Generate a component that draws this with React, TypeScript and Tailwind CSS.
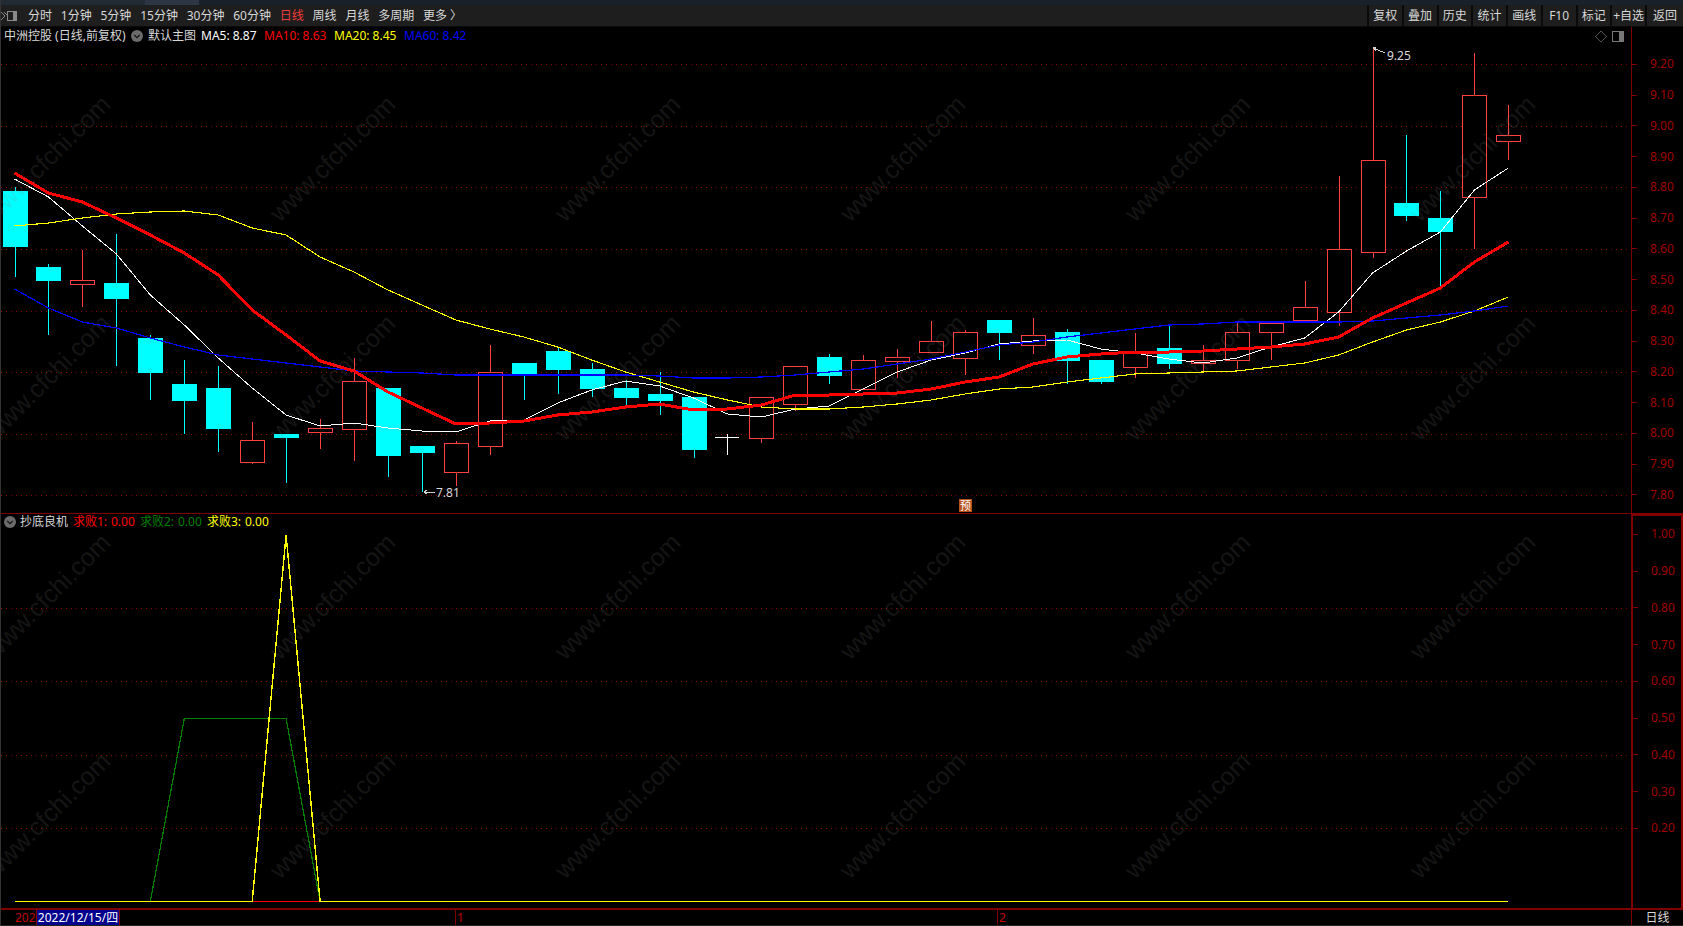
import React from 'react';

type Candle = [number, number, number, number, 'c' | 'r' | 'w'];

const candles: Candle[] = [
  [187, 191, 246, 277, 'c'],
  [264, 267, 280, 335, 'c'],
  [250, 280, 284, 307, 'r'],
  [234, 283, 298, 366, 'c'],
  [335, 338, 372, 400, 'c'],
  [360, 384, 400, 434, 'c'],
  [366, 388, 428, 452, 'c'],
  [422, 440, 462, 464, 'r'],
  [434, 434, 437, 483, 'c'],
  [419, 428, 432, 449, 'r'],
  [358, 381, 429, 461, 'r'],
  [388, 388, 455, 477, 'c'],
  [446, 446, 452, 492, 'c'],
  [441, 443, 472, 486, 'r'],
  [345, 372, 446, 455, 'r'],
  [363, 363, 375, 400, 'c'],
  [348, 351, 369, 394, 'c'],
  [363, 369, 388, 397, 'c'],
  [380, 388, 397, 405, 'c'],
  [372, 394, 400, 415, 'c'],
  [397, 397, 449, 458, 'c'],
  [434, 437, 437, 455, 'w'],
  [397, 397, 438, 443, 'r'],
  [366, 366, 404, 411, 'r'],
  [354, 357, 375, 384, 'c'],
  [355, 360, 389, 389, 'r'],
  [349, 357, 361, 378, 'r'],
  [321, 341, 352, 352, 'r'],
  [330, 332, 358, 375, 'r'],
  [320, 320, 332, 360, 'c'],
  [318, 335, 345, 354, 'r'],
  [329, 332, 360, 384, 'c'],
  [360, 360, 381, 384, 'c'],
  [333, 353, 367, 378, 'r'],
  [325, 348, 363, 369, 'c'],
  [345, 360, 363, 372, 'r'],
  [321, 332, 360, 369, 'r'],
  [323, 323, 332, 360, 'r'],
  [281, 307, 320, 320, 'r'],
  [176, 249, 312, 326, 'r'],
  [48, 160, 252, 258, 'r'],
  [135, 203, 215, 221, 'c'],
  [191, 218, 231, 288, 'c'],
  [53, 95, 197, 249, 'r'],
  [105, 135, 141, 160, 'r'],
];

const ma5 = [179, 197, 226, 254, 295, 325, 358, 388, 415, 426, 423, 428, 431, 432, 421, 420, 403, 390, 381, 386, 398, 414, 417, 409, 406, 389, 372, 360, 353, 344, 341, 340, 349, 353, 359, 363, 358, 347, 338, 312, 273, 251, 232, 190, 168];
const ma10 = [173, 193, 202, 218, 235, 253, 275, 310, 335, 361, 371, 392, 408, 424, 423, 421, 415, 412, 407, 404, 410, 409, 405, 395, 395, 394, 393, 389, 382, 377, 364, 357, 354, 352, 352, 351, 349, 347, 344, 337, 318, 303, 288, 262, 242];
const ma20 = [226, 223, 218, 214, 212, 211, 215, 228, 235, 257, 272, 290, 305, 320, 329, 337, 347, 360, 372, 382, 392, 400, 407, 409, 409, 407, 404, 400, 394, 389, 387, 382, 378, 374, 373, 372, 371, 367, 363, 355, 342, 330, 322, 311, 297];
const ma60 = [289, 308, 322, 328, 338, 347, 355, 359, 363, 367, 371, 372, 373, 375, 375, 375, 375, 375, 375, 376, 378, 378, 377, 375, 372, 369, 364, 359, 352, 345, 342, 337, 333, 329, 325, 324, 322, 322, 322, 322, 321, 318, 315, 311, 306];

const xAt = (i: number) => 14.5 + 33.95 * i;
const pts = (ys: number[]) => ys.map((y, i) => `${xAt(i).toFixed(1)},${y}`).join(' ');

const mainGrid = [64.5, 126.5, 187.5, 249.5, 311.5, 372.5, 434.5, 495.5];
const subGrid = [608.5, 681.5, 755.5, 828.5];
const mainLabels = ['9.20', '9.10', '9.00', '8.90', '8.80', '8.70', '8.60', '8.50', '8.40', '8.30', '8.20', '8.10', '8.00', '7.90', '7.80'];
const subLabels = ['1.00', '0.90', '0.80', '0.70', '0.60', '0.50', '0.40', '0.30', '0.20'];

const leftMenu = ['分时', '1分钟', '5分钟', '15分钟', '30分钟', '60分钟', '日线', '周线', '月线', '多周期', '更多 〉'];
const rightMenu = ['复权', '叠加', '历史', '统计', '画线', 'F10', '标记', '+自选', '返回'];

const zero = 901.5;
const redLine = pts(candles.map(() => zero));
const greenLine = pts(candles.map((_, i) => (i >= 5 && i <= 8 ? 718.5 : zero)));
const yellowLine = pts(candles.map((_, i) => (i === 8 ? 535 : zero)));

function CandleMark({ candle, index }: { candle: Candle; index: number }) {
  const [top, bodyTop, bodyBottom, bottom, kind] = candle;
  const x = Math.round(xAt(index)) + 0.5;
  const left = Math.round(xAt(index) - 12);
  if (kind === 'w') {
    return (
      <g stroke="#ffffff">
        <line x1={x} x2={x} y1={top} y2={bottom} />
        <line x1={left} x2={left + 24} y1={bodyTop + 0.5} y2={bodyTop + 0.5} />
      </g>
    );
  }
  const color = kind === 'c' ? '#00ffff' : '#ff4040';
  return (
    <g stroke={color}>
      <line x1={x} x2={x} y1={top} y2={bodyTop} />
      <line x1={x} x2={x} y1={bodyBottom} y2={bottom} />
      <rect
        x={left + 0.5}
        y={bodyTop + 0.5}
        width={24}
        height={bodyBottom - bodyTop}
        fill={kind === 'c' ? '#00ffff' : '#000000'}
      />
    </g>
  );
}

function Chevron() {
  return (
    <svg width="12" height="12" viewBox="0 0 12 12" className="shrink-0">
      <circle cx="6" cy="6" r="6" fill="#6b6b6b" />
      <path d="M3.2 4.8 6 7.6l2.8-2.8" fill="none" stroke="#111" strokeWidth="1.2" />
    </svg>
  );
}

function AxisLabels({ labels, rowClass }: { labels: string[]; rowClass: string }) {
  return (
    <>
      {labels.map((label) => (
        <div key={label} className={`flex items-center ${rowClass}`}>
          <span className="h-px w-[5px] bg-[#800000]" />
          <span className="ml-[13px] text-[#a00000]">{label}</span>
        </div>
      ))}
    </>
  );
}

function Toolbar() {
  return (
    <div className="flex h-[22px] bg-[#1e1e1e] border-b border-[#0a0a0a] text-[12px] text-[#d8d8d8] leading-none">
      <svg width="17" height="21" viewBox="0 0 17 21" className="shrink-0">
        <path d="M0 7l4 4-4 4M3 7l4 4" fill="none" stroke="#8a8a8a" strokeWidth="1" />
        <rect x="6.5" y="6.5" width="9" height="9" fill="none" stroke="#8a8a8a" />
        <rect x="12" y="7" width="3" height="8" fill="#8a8a8a" />
      </svg>
      <div className="ml-[10px] flex items-center gap-[8.8px]">
        {leftMenu.map((item) => (
          <span key={item} className={item === '日线' ? 'text-[#f03c3c]' : ''}>
            {item}
          </span>
        ))}
      </div>
      <div className="ml-auto flex">
        {rightMenu.map((item) => (
          <div
            key={item}
            className={`flex items-center justify-center border-l-2 border-[#0a0a0a] whitespace-nowrap ${item === '返回' ? 'w-[38px]' : 'w-[34.75px]'}`}
          >
            {item}
          </div>
        ))}
      </div>
    </div>
  );
}

function MainPanel() {
  return (
    <div className="relative flex h-[486px]">
      <svg width="1630" height="486" viewBox="1 27 1630 486" className="block shrink-0" shapeRendering="crispEdges">
        {mainGrid.map((y) => (
          <line key={y} x1="1" x2="1631" y1={y} y2={y} stroke="#8b0000" strokeDasharray="1 4" />
        ))}
        {candles.map((c, i) => (
          <CandleMark key={i} candle={c} index={i} />
        ))}
        <polyline points={pts(ma5)} fill="none" stroke="#ffffff" strokeWidth="1" />
        <polyline points={pts(ma20)} fill="none" stroke="#ffff00" strokeWidth="1.1" />
        <polyline points={pts(ma60)} fill="none" stroke="#0000ff" strokeWidth="1.2" />
        <polyline points={pts(ma10)} fill="none" stroke="#ff0000" strokeWidth="3" />
        {/* high and low marks */}
        <path d="M1373 48l12 5M1373 48l3-1M1373 48l3 3" fill="none" stroke="#d0d0d0" />
        <text x="1387" y="60" fill="#d8d8d8" fontSize="12">9.25</text>
        <path d="M424 492h11M424 492l3-2M424 492l3 2" fill="none" stroke="#d0d0d0" />
        <text x="436" y="497" fill="#d8d8d8" fontSize="12">7.81</text>
        <path d="M1601 31l5.5 5.5-5.5 5.5-5.5-5.5z" fill="none" stroke="#555" />
        <rect x="1612.5" y="31.5" width="11" height="10" rx="1.5" fill="none" stroke="#777" strokeWidth="1.4" />
        <rect x="1619" y="32" width="4" height="9" fill="#777" />
      </svg>
      <div className="absolute left-[3px] top-0 flex h-[17px] items-center text-[12px] leading-none whitespace-nowrap">
        <span className="w-[127px] text-[#d8d8d8]">中洲控股 (日线,前复权)</span>
        <Chevron />
        <span className="ml-[5px] w-[53px] text-[#d8d8d8]">默认主图</span>
        <span className="w-[63px] text-white">MA5: 8.87</span>
        <span className="w-[70px] text-[#ff0000]">MA10: 8.63</span>
        <span className="w-[70px] text-[#ffff00]">MA20: 8.45</span>
        <span className="text-[#0000ff]">MA60: 8.42</span>
      </div>
      <div className="absolute left-[958px] top-[472px] flex h-[13px] w-[13px] items-center justify-center bg-[#b8501c] text-[11px] leading-none text-white">
        预
      </div>
      <div className="w-[52px] border-l border-[#800000] pt-[22px] text-[12px] leading-none">
        <AxisLabels labels={mainLabels} rowClass="h-[30.76px]" />
      </div>
    </div>
  );
}

function SubPanel() {
  return (
    <div className="relative flex h-[395px] border-t border-[#800000]">
      <svg width="1630" height="394" viewBox="1 514 1630 394" className="block shrink-0" shapeRendering="crispEdges">
        {subGrid.map((y) => (
          <line key={y} x1="1" x2="1631" y1={y} y2={y} stroke="#8b0000" strokeDasharray="1 4" />
        ))}
        <polyline points={redLine} fill="none" stroke="#ff0000" strokeWidth="1.2" />
        <polyline points={greenLine} fill="none" stroke="#008000" strokeWidth="1.2" />
        <polyline points={yellowLine} fill="none" stroke="#ffff00" strokeWidth="1.4" />
      </svg>
      <div className="absolute left-[3px] top-0 flex h-[16px] items-center text-[12px] leading-none whitespace-nowrap">
        <Chevron />
        <span className="ml-[4px] w-[53px] text-[#d8d8d8]">抄底良机</span>
        <span className="w-[38px] text-[#ff0000]">求败1:</span>
        <span className="w-[29px] text-[#ff0000]">0.00</span>
        <span className="w-[38px] text-[#008000]">求败2:</span>
        <span className="w-[29px] text-[#008000]">0.00</span>
        <span className="w-[38px] text-[#ffff00]">求败3:</span>
        <span className="text-[#ffff00]">0.00</span>
      </div>
      <div className="w-[52px] border-x-2 border-t-2 border-[#800000] text-[12px] leading-none">
        <AxisLabels labels={subLabels} rowClass="h-[36.75px]" />
      </div>
    </div>
  );
}

function TimeAxis() {
  return (
    <div className="flex h-[17px] items-stretch border-t-2 border-[#800000] text-[12px] leading-none">
      <span className="ml-[14px] flex w-[21px] items-center overflow-hidden text-[#c00000]">202</span>
      <span className="flex w-[84px] items-center justify-center border-x border-[#800000] bg-[#00008c] text-white whitespace-nowrap">
        2022/12/15/四
      </span>
      <span className="ml-[335px] flex w-[542px] items-center border-l border-[#800000] pl-[1px] text-[#c00000]">1</span>
      <span className="flex w-[634px] items-center border-l border-[#800000] pl-[1px] text-[#c00000]">2</span>
      <span className="flex w-[52px] items-center justify-center border-l border-[#800000] text-[#d8d8d8]">日线</span>
    </div>
  );
}

function Watermarks() {
  const cells = Array.from({ length: 24 }, (_, i) => i);
  return (
    <div className="pointer-events-none absolute inset-0 overflow-hidden">
      <div className="absolute left-[-96px] top-[49px] grid grid-cols-[repeat(6,285px)] auto-rows-[219px]">
        {cells.map((i) => (
          <div key={i} className="flex items-center justify-center">
            <span className="-rotate-45 font-['Liberation_Sans',sans-serif] text-[25px] text-[#808080]/[0.18]">www.cfchi.com</span>
          </div>
        ))}
      </div>
    </div>
  );
}

export default function App() {
  return (
    <div className="relative h-[926px] w-[1683px] overflow-hidden bg-black border-l border-[#333333] font-['Noto_Sans','Noto_Sans_CJK_SC',sans-serif]">
      <div className="flex h-[5px] bg-[#1a212b]">
        <div className="w-[144px] bg-[#222a33]" />
        <div className="w-[54px] bg-[#2c3644]" />
      </div>
      <Toolbar />
      <MainPanel />
      <SubPanel />
      <TimeAxis />
      <div className="h-px bg-[#222222]" />
      <Watermarks />
    </div>
  );
}
